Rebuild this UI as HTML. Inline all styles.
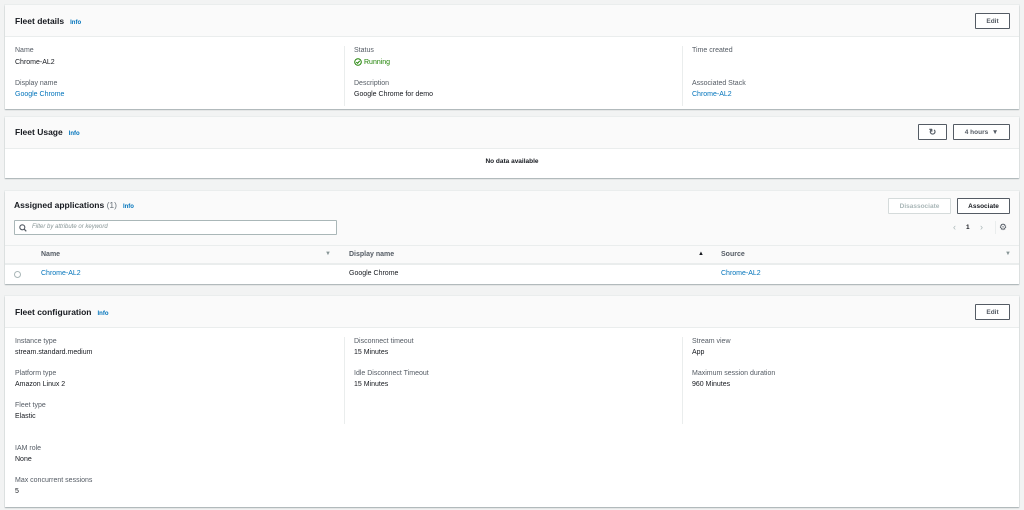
<!DOCTYPE html><html><head><style>
*{margin:0;padding:0;box-sizing:border-box}
body{width:1024px;height:510px;background:#f2f3f3;font-family:"Liberation Sans",sans-serif;font-size:7px;color:#16191f;position:relative;overflow:hidden}
.a{position:absolute}
.card{position:absolute;left:5px;width:1014px;background:#fff;box-shadow:0 1px 1px rgba(0,28,36,.3),0 0 0 1px #eaeded}
.hd{position:absolute;left:0;top:0;width:100%;background:#fafafa;border-bottom:1px solid #eaeded}
h2{position:absolute;font-size:8.5px;font-weight:bold;color:#16191f}
.info{color:#0073bb;font-size:6px;font-weight:bold;margin-left:6px}
.lb{color:#545b64}
.lk{color:#0073bb}
.btn{position:absolute;border:1px solid #545b64;background:#fff;font-size:6.5px;font-weight:bold;color:#545b64;display:flex;align-items:center;justify-content:center;border-radius:1px}
.vl{position:absolute;width:1px;background:#eaeded}
</style></head><body>
<div class="card" style="top:5px;height:104px">
 <div class="hd" style="height:32px"></div>
 <h2 style="left:10px;top:11px">Fleet details<span class="info">Info</span></h2>
 <div class="btn" style="left:970px;top:8px;width:35px;height:16px">Edit</div>
 <div class="a lb" style="left:10px;top:42px">Name</div><div class="a" style="left:10px;top:54px">Chrome-AL2</div>
 <div class="a lb" style="left:10px;top:75px">Display name</div><div class="a lk" style="left:10px;top:86px">Google Chrome</div>
 <div class="vl" style="left:339px;top:41px;height:60px"></div>
 <div class="a lb" style="left:349px;top:42px">Status</div><div class="a" style="left:349px;top:53px;color:#1d8102;display:flex;align-items:center;gap:2px"><svg width="8" height="8" viewBox="0 0 8 8"><circle cx="4" cy="4" r="3.3" fill="none" stroke="#1d8102" stroke-width="1"/><path d="M2.3 4.1L3.6 5.3L5.7 2.8" fill="none" stroke="#1d8102" stroke-width="1"/></svg>Running</div>
 <div class="a lb" style="left:349px;top:75px">Description</div><div class="a" style="left:349px;top:86px">Google Chrome for demo</div>
 <div class="vl" style="left:677px;top:41px;height:60px"></div>
 <div class="a lb" style="left:687px;top:42px">Time created</div>
 <div class="a lb" style="left:687px;top:75px">Associated Stack</div><div class="a lk" style="left:687px;top:86px">Chrome-AL2</div>
</div>
<div class="card" style="top:117px;height:61px">
 <div class="hd" style="height:32px"></div>
 <h2 style="left:10px;top:10px">Fleet Usage<span class="info">Info</span></h2>
 <div class="btn" style="left:913px;top:7px;width:29px;height:16px;font-size:9px">↻</div>
 <div class="btn" style="left:948px;top:7px;width:57px;height:16px">4 hours&nbsp;&nbsp;▼</div>
 <div class="a" style="left:0;width:100%;top:41px;text-align:center;font-weight:bold;font-size:6.5px">No data available</div>
</div>
<div class="card" style="top:191px;height:93px">
 <div class="hd" style="height:73px"></div>
 <h2 style="left:9px;top:9px">Assigned applications <span style="color:#687078;font-weight:normal">(1)</span><span class="info">Info</span></h2>
 <div class="a" style="left:9px;top:29px;width:323px;height:15px;border:1px solid #aab7b8;background:#fff;border-radius:1px;color:#879596;font-style:italic;font-size:6px;line-height:13px;padding-left:17px">Filter by attribute or keyword<svg style="position:absolute;left:4px;top:3px" width="8" height="8" viewBox="0 0 8 8"><circle cx="3.3" cy="3.3" r="2.5" fill="none" stroke="#545b64" stroke-width="1.1"/><path d="M5.1 5.1L7.3 7.3" stroke="#545b64" stroke-width="1.2"/></svg></div>
 <div class="btn" style="left:883px;top:7px;width:63px;height:16px;border-color:#d5dbdb;color:#aab7b8">Disassociate</div>
 <div class="btn" style="left:952px;top:7px;width:53px;height:16px;border-color:#545b64;color:#16191f">Associate</div>
 <div class="a" style="left:948px;top:31px;color:#aab7b8;font-size:9px">‹</div>
 <div class="a" style="left:961px;top:33px;font-weight:bold;font-size:6.5px">1</div>
 <div class="a" style="left:975px;top:31px;color:#aab7b8;font-size:9px">›</div>
 <div class="a" style="left:990px;top:30px;width:1px;height:13px;background:#eaeded"></div>
 <div class="a" style="left:994px;top:31px;font-size:9px;color:#545b64">⚙</div>
 <div class="a" style="left:0;top:54px;width:100%;height:1px;background:#eaeded"></div>
 <div class="a" style="left:0;top:73px;width:100%;height:1px;background:#eaeded"></div>
 <div class="a" style="left:36px;top:60px;font-weight:bold;color:#545b64">Name</div>
 <div class="a" style="left:320px;top:60px;color:#879596;font-size:6px">▼</div>
 <div class="a" style="left:344px;top:60px;font-weight:bold;color:#545b64">Display name</div>
 <div class="a" style="left:693px;top:60px;font-size:6px">▲</div>
 <div class="a" style="left:716px;top:60px;font-weight:bold;color:#545b64">Source</div>
 <div class="a" style="left:1000px;top:60px;color:#879596;font-size:6px">▼</div>
 <div class="a" style="left:9px;top:80px;width:7px;height:7px;border:1px solid #aab7b8;border-radius:50%"></div>
 <div class="a lk" style="left:36px;top:79px">Chrome-AL2</div>
 <div class="a" style="left:344px;top:79px">Google Chrome</div>
 <div class="a lk" style="left:716px;top:79px">Chrome-AL2</div>
</div>
<div class="card" style="top:296px;height:211px">
 <div class="hd" style="height:32px"></div>
 <h2 style="left:10px;top:11px">Fleet configuration<span class="info">Info</span></h2>
 <div class="btn" style="left:970px;top:8px;width:35px;height:16px">Edit</div>
 <div class="a lb" style="left:10px;top:42px">Instance type</div><div class="a" style="left:10px;top:53px">stream.standard.medium</div>
 <div class="a lb" style="left:10px;top:74px">Platform type</div><div class="a" style="left:10px;top:85px">Amazon Linux 2</div>
 <div class="a lb" style="left:10px;top:106px">Fleet type</div><div class="a" style="left:10px;top:117px">Elastic</div>
 <div class="a lb" style="left:10px;top:149px">IAM role</div><div class="a" style="left:10px;top:160px">None</div>
 <div class="a lb" style="left:10px;top:181px">Max concurrent sessions</div><div class="a" style="left:10px;top:192px">5</div>
 <div class="vl" style="left:339px;top:41px;height:87px"></div>
 <div class="a lb" style="left:349px;top:42px">Disconnect timeout</div><div class="a" style="left:349px;top:53px">15 Minutes</div>
 <div class="a lb" style="left:349px;top:74px">Idle Disconnect Timeout</div><div class="a" style="left:349px;top:85px">15 Minutes</div>
 <div class="vl" style="left:677px;top:41px;height:87px"></div>
 <div class="a lb" style="left:687px;top:42px">Stream view</div><div class="a" style="left:687px;top:53px">App</div>
 <div class="a lb" style="left:687px;top:74px">Maximum session duration</div><div class="a" style="left:687px;top:85px">960 Minutes</div>
</div>
</body></html>
